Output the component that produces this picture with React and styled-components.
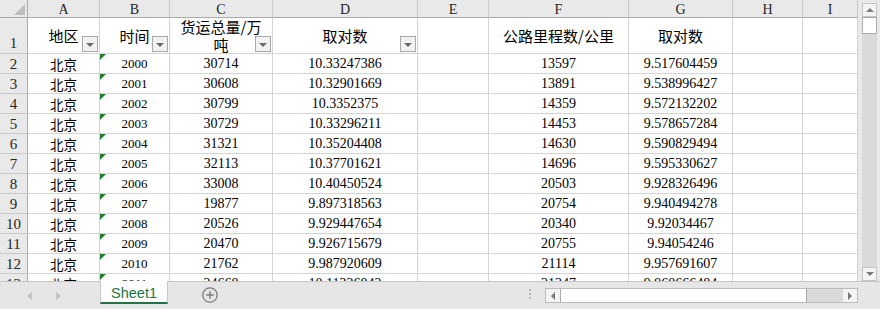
import React from 'react';
import styled, { createGlobalStyle, css } from 'styled-components';

const CJK = '"Noto Sans CJK SC", "Liberation Serif", serif';
const SERIF = '"Liberation Serif", "Noto Sans CJK SC", serif';
const UI = '"Liberation Sans", Arial, sans-serif';

const GlobalStyle = createGlobalStyle`
  html, body { margin: 0; padding: 0; background: #fff; overflow: hidden; }
  #root { width: 880px; height: 309px; }
`;

const Window = styled.div`
  width: 880px;
  height: 309px;
  display: grid;
  grid-template-rows: 281px 28px;
  background: #fff;
`;

const Top = styled.div`
  display: flex;
  min-height: 0;
`;

const Sheet = styled.div`
  display: grid;
  grid-template-columns: 28px 72px 70px 103px 145px 71px 140px 104px 70px 55px;
  grid-template-rows: 18px 36px;
  grid-auto-rows: 20px;
  width: 858px;
  height: 281px;
  overflow: hidden;
  flex: none;
`;

const Cell = styled.div`
  box-sizing: border-box;
  position: relative;
  display: flex;
  align-items: center;
  justify-content: center;
  border-right: 1px solid #d4d4d4;
  border-bottom: 1px solid #d4d4d4;
  white-space: nowrap;
  color: #000;
  font-family: ${(p) => (p.$cjk ? CJK : SERIF)};
  font-size: ${(p) => p.$size || 14}px;
  padding-top: 1px;
  ${(p) =>
    p.$flag &&
    css`
      &::before {
        content: '';
        position: absolute;
        left: 0;
        top: 0;
        border-top: 6px solid #1f7f2c;
        border-right: 6px solid transparent;
      }
    `}
`;

const TitleCell = styled(Cell)`
  font-size: 15px;
  line-height: 17.5px;
  text-align: center;
  flex-direction: column;
  padding-top: 0;
`;

const ColHead = styled.div`
  box-sizing: border-box;
  display: flex;
  align-items: center;
  justify-content: center;
  background: #e9e9e9;
  border-right: 1px solid #c9c9c9;
  border-bottom: 1px solid #ababab;
  font-family: ${SERIF};
  font-size: 14px;
  color: #262626;
  padding-top: 2px;
`;

const Corner = styled(ColHead)`
  position: relative;
  border-right: 1px solid #ababab;
  &::after {
    content: '';
    position: absolute;
    right: 2px;
    bottom: 2px;
    border-bottom: 11px solid #bdbdbd;
    border-left: 11px solid transparent;
  }
`;

const RowHead = styled.div`
  box-sizing: border-box;
  display: flex;
  align-items: ${(p) => (p.$tall ? 'flex-end' : 'center')};
  justify-content: center;
  background: #e9e9e9;
  border-right: 1px solid #ababab;
  border-bottom: 1px solid #c9c9c9;
  font-family: ${SERIF};
  font-size: 15px;
  color: #262626;
  padding-bottom: ${(p) => (p.$tall ? '1px' : '0')};
  padding-top: ${(p) => (p.$tall ? '0' : '1px')};
`;

const FilterButton = styled.span`
  position: absolute;
  right: 1px;
  bottom: 1px;
  width: 16px;
  height: 16px;
  box-sizing: border-box;
  border: 1px solid #a9a9a9;
  background: #f2f2f2;
  display: flex;
  align-items: center;
  justify-content: center;
  &::after {
    content: '';
    border-top: 4px solid #6a6a6a;
    border-left: 4px solid transparent;
    border-right: 4px solid transparent;
    margin-top: 1px;
  }
`;

const VScroll = styled.div`
  width: 22px;
  background: #e9e9e9;
  display: flex;
  flex-direction: column;
  padding: 3px 3px 0 4px;
  box-sizing: border-box;
`;

const ScrollBtn = styled.div`
  box-sizing: border-box;
  width: 15px;
  height: 14px;
  border: 1px solid #c3c3c3;
  background: #f4f4f4;
  display: flex;
  align-items: center;
  justify-content: center;
  flex: none;
  &::after {
    content: '';
    ${(p) =>
      p.$dir === 'up' &&
      css`
        border-bottom: 4px solid #7a7a7a;
        border-left: 4px solid transparent;
        border-right: 4px solid transparent;
      `}
    ${(p) =>
      p.$dir === 'down' &&
      css`
        border-top: 4px solid #7a7a7a;
        border-left: 4px solid transparent;
        border-right: 4px solid transparent;
      `}
    ${(p) =>
      p.$dir === 'left' &&
      css`
        border-right: 4px solid #7a7a7a;
        border-top: 4px solid transparent;
        border-bottom: 4px solid transparent;
      `}
    ${(p) =>
      p.$dir === 'right' &&
      css`
        border-left: 4px solid #7a7a7a;
        border-top: 4px solid transparent;
        border-bottom: 4px solid transparent;
      `}
  }
`;

const VTrack = styled.div`
  flex: 1;
  background: #dadada;
  width: 15px;
`;

const VThumb = styled.div`
  box-sizing: border-box;
  height: 17px;
  background: #fff;
  border: 1px solid #ababab;
`;

const Footer = styled.div`
  box-sizing: border-box;
  display: flex;
  align-items: flex-start;
  height: 28px;
  background: #e6e6e6;
  border-top: 1px solid #c6c6c6;
`;

const Nav = styled.div`
  width: 100px;
  height: 27px;
  display: flex;
  align-items: center;
  padding-left: 27px;
  gap: 24px;
  box-sizing: border-box;
  flex: none;
`;

const NavArrow = styled.span`
  width: 0;
  height: 0;
  border-top: 4px solid transparent;
  border-bottom: 4px solid transparent;
  ${(p) =>
    p.$dir === 'left'
      ? css`border-right: 5px solid #c4c4c4;`
      : css`border-left: 5px solid #c4c4c4;`}
`;

const Tab = styled.div`
  box-sizing: border-box;
  width: 68px;
  height: 23px;
  margin-top: -1px;
  background: #fff;
  border-left: 1px solid #c6c6c6;
  border-right: 1px solid #c6c6c6;
  border-bottom: 2px solid #217346;
  display: flex;
  align-items: center;
  justify-content: center;
  font-family: ${UI};
  font-size: 14.5px;
  color: #217346;
  padding-top: 2px;
  flex: none;
`;

const AddButton = styled.div`
  margin: 5px 0 0 34px;
  width: 16px;
  height: 16px;
  flex: none;
  display: flex;
`;

const Spacer = styled.div`
  flex: 1;
`;

const Grip = styled.div`
  margin: 7px 14px 0 0;
  display: flex;
  flex-direction: column;
  gap: 2px;
  flex: none;
  span {
    width: 2px;
    height: 2px;
    background: #b5b5b5;
  }
`;

const HScroll = styled.div`
  box-sizing: border-box;
  width: 313px;
  height: 15px;
  margin: 6px 22px 0 0;
  display: flex;
  background: #dadada;
  border: 1px solid #bcbcbc;
  flex: none;
`;

const HThumb = styled.div`
  box-sizing: border-box;
  width: 247px;
  background: #fff;
  border-left: 1px solid #ababab;
  border-right: 1px solid #ababab;
`;

const HTrack = styled.div`
  flex: 1;
`;

const HBtn = styled(ScrollBtn)`
  width: 14px;
  height: 13px;
  border: none;
  background: #f4f4f4;
`;

const LETTERS = ['A', 'B', 'C', 'D', 'E', 'F', 'G', 'H', 'I'];

const DATA = [
  ['2000', '30714', '10.33247386', '13597', '9.517604459'],
  ['2001', '30608', '10.32901669', '13891', '9.538996427'],
  ['2002', '30799', '10.3352375', '14359', '9.572132202'],
  ['2003', '30729', '10.33296211', '14453', '9.578657284'],
  ['2004', '31321', '10.35204408', '14630', '9.590829494'],
  ['2005', '32113', '10.37701621', '14696', '9.595330627'],
  ['2006', '33008', '10.40450524', '20503', '9.928326496'],
  ['2007', '19877', '9.897318563', '20754', '9.940494278'],
  ['2008', '20526', '9.929447654', '20340', '9.92034467'],
  ['2009', '20470', '9.926715679', '20755', '9.94054246'],
  ['2010', '21762', '9.987920609', '21114', '9.957691607'],
  ['2011', '24668', '10.11326842', '21347', '9.968666484'],
];

function PlusCircle() {
  return (
    <svg width="16" height="16" viewBox="0 0 16 16">
      <circle cx="8" cy="8" r="7.2" fill="none" stroke="#7b7b7b" strokeWidth="1.3" />
      <path d="M8 4.2v7.6M4.2 8h7.6" stroke="#7b7b7b" strokeWidth="1.4" />
    </svg>
  );
}

export default function App() {
  return (
    <>
      <GlobalStyle />
      <Window>
        <Top>
          <Sheet>
            <Corner />
            {LETTERS.map((l) => (
              <ColHead key={l}>{l}</ColHead>
            ))}

            <RowHead $tall>1</RowHead>
            <TitleCell $cjk>
              地区
              <FilterButton />
            </TitleCell>
            <TitleCell $cjk>
              时间
              <FilterButton />
            </TitleCell>
            <TitleCell $cjk>
              <span>货运总量/万</span>
              <span>吨</span>
              <FilterButton />
            </TitleCell>
            <TitleCell $cjk>
              取对数
              <FilterButton />
            </TitleCell>
            <TitleCell />
            <TitleCell $cjk>公路里程数/公里</TitleCell>
            <TitleCell $cjk>取对数</TitleCell>
            <TitleCell />
            <TitleCell />

            {DATA.map((r, i) => (
              <React.Fragment key={r[0]}>
                <RowHead>{i + 2}</RowHead>
                <Cell $cjk $size={13.5}>北京</Cell>
                <Cell $size={13} $flag>{r[0]}</Cell>
                <Cell>{r[1]}</Cell>
                <Cell>{r[2]}</Cell>
                <Cell />
                <Cell>{r[3]}</Cell>
                <Cell>{r[4]}</Cell>
                <Cell />
                <Cell />
              </React.Fragment>
            ))}
          </Sheet>
          <VScroll>
            <ScrollBtn $dir="up" />
            <VTrack>
              <VThumb />
            </VTrack>
            <ScrollBtn $dir="down" />
          </VScroll>
        </Top>
        <Footer>
          <Nav>
            <NavArrow $dir="left" />
            <NavArrow $dir="right" />
          </Nav>
          <Tab>Sheet1</Tab>
          <AddButton>
            <PlusCircle />
          </AddButton>
          <Spacer />
          <Grip>
            <span />
            <span />
            <span />
          </Grip>
          <HScroll>
            <HBtn $dir="left" />
            <HThumb />
            <HTrack />
            <HBtn $dir="right" />
          </HScroll>
        </Footer>
      </Window>
    </>
  );
}
